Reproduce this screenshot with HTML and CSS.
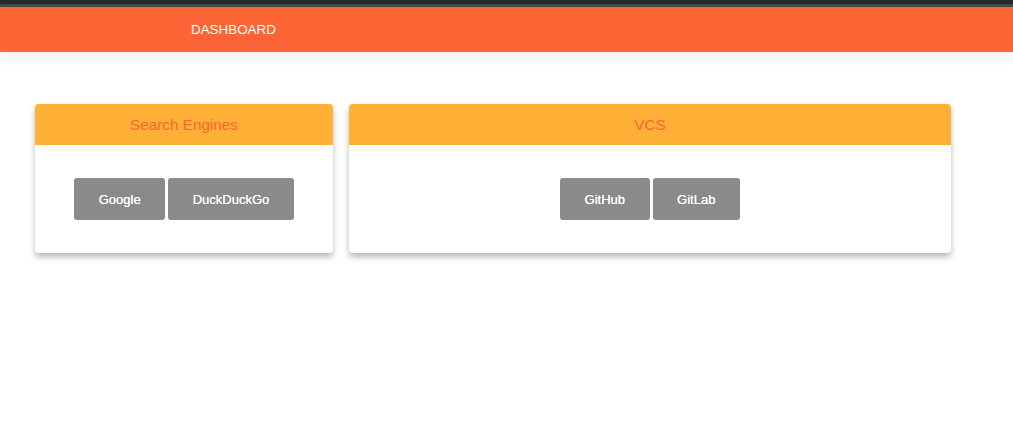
FILE: index.html
```html
<!DOCTYPE html>
<html>
<head>
<meta charset="utf-8">
<link rel="stylesheet" href="styles.css">
</head>
<body>
<div class="topstrip"></div>
<header class="navbar">
  <span class="brand">DASHBOARD</span>
</header>
<main class="grid">
  <section class="card card-small">
    <div class="card-title">Search Engines</div>
    <div class="card-body">
      <a class="btn">Google</a>
      <a class="btn">DuckDuckGo</a>
    </div>
  </section>
  <section class="card card-large">
    <div class="card-title">VCS</div>
    <div class="card-body">
      <a class="btn">GitHub</a>
      <a class="btn">GitLab</a>
    </div>
  </section>
</main>
</body>
</html>
```
FILE: styles.css
```css
html, body {
  margin: 0;
  padding: 0;
  background: #ffffff;
  font-family: "Liberation Sans", Arial, sans-serif;
}
body {
  min-height: 100vh;
}
.topstrip {
  height: 4px;
  background: #26272b;
  border-bottom: 3px solid #48484c;
}
.navbar {
  height: 45px;
  background: #fc6535;
  display: flex;
  align-items: center;
  padding-left: 191px;
  box-shadow: 0 4px 12px rgba(0, 0, 0, 0.08);
  position: relative;
}
.brand {
  color: #ffffff;
  font-family: "Liberation Sans", Arial, sans-serif;
  font-size: 13.4px;
}
.grid {
  display: flex;
  gap: 16px;
  padding: 52px 0 20px 35px;
  align-items: flex-start;
}
.card {
  background: #ffffff;
  border-radius: 4px;
  box-shadow: 0 4px 6px rgba(0, 0, 0, 0.28);
  overflow: hidden;
}
.card-small { width: 298px; }
.card-large { width: 602px; }
.card-title {
  height: 41px;
  background: #ffb036;
  color: #fc6535;
  font-size: 15.3px;
  display: flex;
  align-items: center;
  justify-content: center;
}
.card-body {
  display: flex;
  justify-content: center;
  gap: 3px;
  padding: 33px 0;
}
.btn {
  display: flex;
  align-items: center;
  justify-content: center;
  height: 42px;
  padding: 0 24.5px;
  background: #8a8a8a;
  color: #ffffff;
  border-radius: 3px;
  font-size: 13px;
  text-shadow: 0 0 0.4px #ffffff;
}
```
